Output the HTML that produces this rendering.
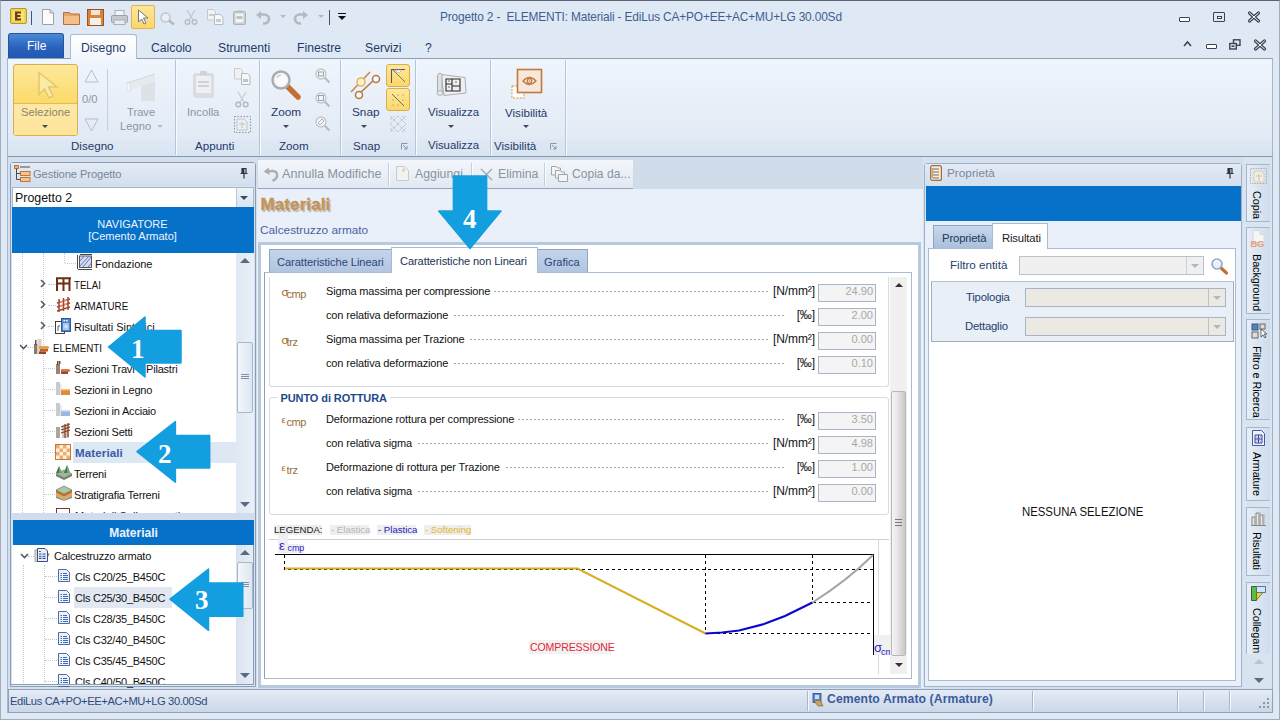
<!DOCTYPE html>
<html><head><meta charset="utf-8">
<style>
*{box-sizing:border-box;margin:0;padding:0}
html,body{width:1281px;height:723px;overflow:hidden;background:#fff;font-family:"Liberation Sans",sans-serif;font-size:12px;color:#000}
.a{position:absolute}
svg{position:absolute;overflow:visible}
#win{left:0;top:0;width:1280px;height:720px;background:#dfe9f5;overflow:hidden}
.t{position:absolute;white-space:nowrap;line-height:1}
.rt{position:absolute;white-space:nowrap;line-height:1;font-size:11.6px;color:#1e3a66}
.dis{color:#8c96a3}
.sep{position:absolute;width:1px;background:linear-gradient(rgba(170,190,215,0),#b5c6dc 15%,#b5c6dc 85%,rgba(170,190,215,0))}
.gsep{position:absolute;top:60px;width:2px;height:95px;border-left:1px solid #b4c5db;border-right:1px solid #f7faff}
.tri{position:absolute;width:0;height:0;border-left:3px solid transparent;border-right:3px solid transparent;border-top:3px solid #3c4a5c}
</style></head><body>
<div id="win" class="a">
<!-- ===== TITLE BAR ===== -->
<svg style="left:10px;top:8px" width="17" height="17" viewBox="0 0 17 17">
 <rect x="0.5" y="0.5" width="16" height="15" rx="1.5" fill="#f4d54a" stroke="#b9952a"/>
 <rect x="3" y="3" width="11" height="10" fill="#f9e27a"/>
 <path d="M5 3.5h6v2H7.3v1.5h3.2v2H7.3v1.6H11v2H5z" fill="#6b3a1c"/>
</svg>
<div class="a" style="left:31px;top:11px;width:1px;height:14px;background:#4a5563"></div>
<svg style="left:41px;top:9px" width="14" height="16" viewBox="0 0 14 16"><path d="M1.5 .5h7.5l3.5 3.5v11.5h-11z" fill="#fbfbfb" stroke="#9aa2ad"/><path d="M9 .5v3.5h3.5" fill="none" stroke="#9aa2ad"/></svg>
<svg style="left:63px;top:10px" width="17" height="15" viewBox="0 0 17 15"><path d="M.5 2.5h6l1.5 1.5h8.5v10.5H.5z" fill="#e6a36a" stroke="#b86f35"/><path d="M1 6h15v8H1z" fill="#f2bf8a"/></svg>
<svg style="left:87px;top:9px" width="17" height="17" viewBox="0 0 17 17"><rect x=".5" y=".5" width="16" height="16" fill="#d9843e" stroke="#9c5220"/><rect x="4" y="1" width="9" height="5" fill="#f3e4d4"/><rect x="3" y="9" width="11" height="7" fill="#f5f0ea"/></svg>
<svg style="left:111px;top:10px" width="17" height="15" viewBox="0 0 17 15"><rect x="4" y=".5" width="9" height="5" fill="#f4f4f4" stroke="#aab0b8"/><rect x=".5" y="5.5" width="16" height="7" rx="1" fill="#c4c9cf" stroke="#9aa0a8"/><rect x="3" y="10" width="11" height="4.5" fill="#e9ebee" stroke="#aab0b8"/></svg>
<div class="a" style="left:131px;top:5px;width:24px;height:24px;background:linear-gradient(#fde69a,#fcd66a);border:1px solid #e0b450;border-radius:2px"></div>
<svg style="left:137px;top:9px" width="13" height="16" viewBox="0 0 13 16"><path d="M1.5 1v12l3-3 2.5 5 2-1-2.5-5h4.5z" fill="#fff" stroke="#6e7680"/></svg>
<svg style="left:160px;top:12px" width="16" height="13" viewBox="0 0 16 13"><circle cx="5.5" cy="5.5" r="4.5" fill="#eceff2" stroke="#c2c6cc" stroke-width="1.5"/><path d="M9 8.5l5 4" stroke="#b4b8be" stroke-width="2.4"/></svg>
<svg style="left:184px;top:10px" width="14" height="15" viewBox="0 0 14 15"><path d="M3 0l6 10M11 0L5 10" stroke="#c4c8cd" stroke-width="1.3"/><circle cx="3.5" cy="12" r="2.3" fill="none" stroke="#b8bcc2" stroke-width="1.4"/><circle cx="10.5" cy="12" r="2.3" fill="none" stroke="#b8bcc2" stroke-width="1.4"/></svg>
<svg style="left:207px;top:9px" width="17" height="16" viewBox="0 0 17 16"><path d="M.5 .5h6l2 2v8.5H.5z" fill="#f2f3f5" stroke="#c5c9ce"/><path d="M7.5 5.5h6l2.5 2.5v7.5H7.5z" fill="#f6f7f8" stroke="#b9bdc3"/><rect x="9" y="10" width="5" height="3" fill="#c8ccd1"/><rect x="2" y="5" width="5" height="2" fill="#c8ccd1"/></svg>
<svg style="left:233px;top:10px" width="13" height="15" viewBox="0 0 13 15"><rect x=".5" y="1.5" width="12" height="13" rx="1" fill="#c9cdd2" stroke="#aeb3b9"/><rect x="2.5" y="3.5" width="8" height="9" fill="#f3f4f5"/><rect x="3.5" y="6" width="6" height="3" fill="#bfc3c8"/><rect x="4" y=".5" width="5" height="2" fill="#b4b9bf"/></svg>
<svg style="left:256px;top:11px" width="15" height="14" viewBox="0 0 15 14"><path d="M4 3.5h4.5a4.5 4.5 0 0 1 0 9H7" fill="none" stroke="#b4b9bf" stroke-width="2.6"/><path d="M0 4l5-4v8z" fill="#b4b9bf"/></svg>
<div class="tri" style="left:280px;top:15px;border-top-color:#b4b9bf"></div>
<svg style="left:293px;top:11px" width="15" height="14" viewBox="0 0 15 14"><path d="M11 3.5H6.5a4.5 4.5 0 0 0 0 9H8" fill="none" stroke="#b4b9bf" stroke-width="2.6"/><path d="M15 4l-5-4v8z" fill="#b4b9bf"/></svg>
<div class="tri" style="left:318px;top:15px;border-top-color:#b4b9bf"></div>
<div class="a" style="left:329px;top:10px;width:1px;height:15px;background:#4a5563"></div>
<div class="a" style="left:338px;top:13px;width:8px;height:1px;background:#111"></div>
<div class="tri" style="left:338px;top:16px;border-left-width:4px;border-right-width:4px;border-top:4px solid #111"></div>

<div class="t" style="left:440px;top:12px;font-size:11.9px;letter-spacing:-0.16px;color:#3e5e8e">Progetto 2 -&nbsp; ELEMENTI: Materiali - EdiLus CA+PO+EE+AC+MU+LG 30.00Sd</div>
<!-- window buttons -->
<div class="a" style="left:1179px;top:17px;width:11px;height:5px;border:1.5px solid #3a4350;border-radius:1px;background:#fff"></div>
<div class="a" style="left:1213px;top:12px;width:12px;height:10px;border:1.5px solid #3a4350;border-radius:1px"></div>
<div class="a" style="left:1217px;top:15.5px;width:5px;height:3.5px;border:1px solid #3a4350;background:#fff"></div>
<svg style="left:1248px;top:12px" width="12" height="10" viewBox="0 0 12 10"><path d="M1.5 1l9 8M10.5 1l-9 8" stroke="#3a4350" stroke-width="3.2" stroke-linecap="round"/><path d="M1.5 1l9 8M10.5 1l-9 8" stroke="#fff" stroke-width="1" stroke-linecap="round"/></svg>
<!-- MDI buttons -->
<svg style="left:1183px;top:41px" width="9" height="6" viewBox="0 0 9 6"><path d="M1 5l3.5-4 3.5 4" fill="none" stroke="#3a4350" stroke-width="1.5"/></svg>
<div class="a" style="left:1206px;top:44px;width:11px;height:5px;border:1.5px solid #3a4350;border-radius:1px;background:#fff"></div>
<svg style="left:1229px;top:39px" width="12" height="11" viewBox="0 0 12 11"><rect x="4.5" y=".8" width="6.5" height="5.5" fill="#dfe9f5" stroke="#3a4350" stroke-width="1.4"/><rect x=".8" y="4.5" width="6.5" height="5.5" fill="#dfe9f5" stroke="#3a4350" stroke-width="1.4"/><rect x="2.5" y="6.5" width="3" height="1.5" fill="#3a4350"/></svg>
<svg style="left:1254px;top:40px" width="12" height="10" viewBox="0 0 12 10"><path d="M1.5 1l9 8M10.5 1l-9 8" stroke="#3a4350" stroke-width="3.2" stroke-linecap="round"/><path d="M1.5 1l9 8M10.5 1l-9 8" stroke="#fff" stroke-width="1" stroke-linecap="round"/></svg>

<!-- ===== RIBBON TABS ===== -->
<div class="a" style="left:8px;top:33px;width:56px;height:25px;background:linear-gradient(#4a8ad8,#2a63bd 55%,#1f58b2);border:1px solid #27539a;border-bottom:none;border-radius:3px 3px 0 0"></div>
<div class="t" style="left:27px;top:40px;font-size:12px;color:#fff">File</div>
<div class="a" style="left:70px;top:34px;width:67px;height:25px;background:linear-gradient(#fdfeff,#f3f7fc);border:1px solid #a8bcd6;border-bottom:none;border-radius:3px 3px 0 0;z-index:2"></div>
<div class="rt" style="left:81px;top:42px;font-size:12.2px;z-index:3">Disegno</div>
<div class="rt" style="left:151px;top:42px;font-size:12.2px">Calcolo</div>
<div class="rt" style="left:218px;top:42px;font-size:12.2px">Strumenti</div>
<div class="rt" style="left:297px;top:42px;font-size:12.2px">Finestre</div>
<div class="rt" style="left:365px;top:42px;font-size:12.2px">Servizi</div>
<div class="rt" style="left:425px;top:42px;font-size:12.2px">?</div>
<!-- ===== RIBBON BODY ===== -->
<div class="a" style="left:7px;top:156px;width:1266px;height:557px;background:#d5e0ee;border-left:1px solid #a3b6cf;border-right:1px solid #a3b6cf"></div>
<div class="a" style="left:7px;top:58px;width:1266px;height:99px;background:linear-gradient(#eef5fc 0%,#e8eff8 45%,#dfe8f4 100%);border:1px solid #a3b6cf;border-top-color:#8d9db3;border-bottom-color:#8797ad"></div>
<div class="a" style="left:8px;top:139px;width:1264px;height:17px;background:linear-gradient(#dfe8f4,#d9e4f2)"></div>
<!-- Disegno group -->
<div class="a" style="left:13px;top:64px;width:65px;height:72px;background:linear-gradient(#fde89c,#fcda68 55%,#fcdf7a);border:1px solid #d9ae4c;border-radius:3px"></div>
<div class="a" style="left:14px;top:103px;width:63px;height:1px;background:#e2b85a"></div>
<div class="a" style="left:14px;top:104px;width:63px;height:31px;background:linear-gradient(#fde9a6,#fde49a)"></div>
<svg style="left:37px;top:71px" width="22" height="29" viewBox="0 0 22 29"><path d="M2 1.5v22l5.5-5.5 4.5 9 4-2-4.5-9h8.5z" fill="#fbe9a6" stroke="#e4c572" stroke-width="1.5"/></svg>
<div class="rt dis" style="left:21px;top:107px;font-size:11.2px;color:#8b8470">Selezione</div>
<div class="tri" style="left:42px;top:125px"></div>
<svg style="left:84px;top:69px" width="15" height="14" viewBox="0 0 15 14"><path d="M7.5 1L14 13H1z" fill="none" stroke="#b6bfca"/></svg>
<div class="rt dis" style="left:82px;top:94px;font-size:11.2px;color:#8c96a3">0/0</div>
<svg style="left:84px;top:118px" width="15" height="14" viewBox="0 0 15 14"><path d="M7.5 13L14 1H1z" fill="none" stroke="#b6bfca"/></svg>
<div class="a" style="left:107px;top:69px;width:1px;height:62px;background:#c3d0e0"></div>
<svg style="left:126px;top:71px" width="32" height="30" viewBox="0 0 32 30"><path d="M1 12L29 3v8L1 20z" fill="#e6eaee"/><path d="M1 12l28-9" stroke="#d2d8de"/><rect x="1" y="12" width="3" height="8" fill="#f4f6f8" stroke="#d0d6dc" stroke-width=".6"/><path d="M15 15l14-4v19H15z" fill="#dde2e7"/></svg>
<div class="rt dis" style="left:127px;top:107px;font-size:11.2px;color:#8c96a3">Trave</div>
<div class="rt dis" style="left:120px;top:121px;font-size:11.2px;color:#8c96a3">Legno</div>
<div class="tri" style="left:157px;top:125px;border-top-color:#b6bfca"></div>
<div class="rt" style="left:71px;top:140px;font-size:11.6px">Disegno</div>
<div class="gsep" style="left:175px"></div>
<!-- Appunti -->
<svg style="left:192px;top:70px" width="24" height="29" viewBox="0 0 24 29"><rect x="1" y="3" width="21" height="25" rx="3" fill="#d9dde2"/><rect x="4" y="6" width="15" height="17" fill="#eef0f2"/><rect x="6" y="11" width="11" height="2" fill="#cdd2d7"/><rect x="6" y="15" width="11" height="2" fill="#cdd2d7"/><rect x="8" y="1" width="7" height="4" rx="1" fill="#cfd4d9"/></svg>
<div class="rt dis" style="left:187px;top:107px;font-size:11.2px;color:#8c96a3">Incolla</div>
<svg style="left:234px;top:68px" width="17" height="17" viewBox="0 0 17 17"><path d="M.5 .5h6l2 2v8.5H.5z" fill="#f0f1f3" stroke="#c9cdd2"/><path d="M7.5 5.5h6l2.5 2.5v8.5H7.5z" fill="#f6f7f8" stroke="#b4b9bf"/><rect x="9" y="11" width="5" height="3" fill="#c2c6cb"/></svg>
<svg style="left:235px;top:92px" width="14" height="16" viewBox="0 0 14 16"><path d="M3 0l6 10M11 0L5 10" stroke="#c8ccd1" stroke-width="1.2"/><circle cx="3.3" cy="12.5" r="2.3" fill="none" stroke="#b4b8be" stroke-width="1.5"/><circle cx="10.7" cy="12.5" r="2.3" fill="none" stroke="#b4b8be" stroke-width="1.5"/></svg>
<svg style="left:234px;top:116px" width="17" height="17" viewBox="0 0 17 17"><rect x=".5" y=".5" width="16" height="16" fill="none" stroke="#8f969e" stroke-dasharray="1.5 1.5"/><path d="M3 3h7l3 3v8H3z" fill="#eceef0" stroke="#c2c6cb"/><path d="M5 8h6M8 6v6" stroke="#c2c6cb"/></svg>
<div class="rt" style="left:195px;top:140px;font-size:11.6px">Appunti</div>
<div class="gsep" style="left:259px"></div>
<!-- Zoom -->
<svg style="left:271px;top:70px" width="30" height="30" viewBox="0 0 30 30"><path d="M16 16l11 11" stroke="#c27034" stroke-width="5.5" stroke-linecap="round"/><circle cx="10" cy="10" r="8.5" fill="#f3f3f3" stroke="#a9adb2" stroke-width="2.5"/><circle cx="10" cy="10" r="6" fill="#fafafa"/><path d="M6 8a4 4 0 0 1 4-3" stroke="#b0b0b0" fill="none"/></svg>
<div class="rt" style="left:271px;top:107px;font-size:11.8px">Zoom</div>
<div class="tri" style="left:283px;top:125px"></div>
<svg style="left:315px;top:68px" width="16" height="16" viewBox="0 0 16 16"><path d="M8.5 8.5l6 6" stroke="#b8bcc1" stroke-width="2.2"/><circle cx="6" cy="6" r="5" fill="#f4f5f6" stroke="#c2c6cb" stroke-width="1.3"/><rect x="3.5" y="4" width="5" height="4" fill="none" stroke="#888e96" stroke-width=".8"/></svg>
<svg style="left:315px;top:92px" width="16" height="16" viewBox="0 0 16 16"><path d="M8.5 8.5l6 6" stroke="#b8bcc1" stroke-width="2.2"/><circle cx="6" cy="6" r="5" fill="#f4f5f6" stroke="#c2c6cb" stroke-width="1.3"/><rect x="3.5" y="3.5" width="5" height="5" fill="none" stroke="#888e96" stroke-width=".8"/></svg>
<svg style="left:315px;top:116px" width="16" height="16" viewBox="0 0 16 16"><path d="M8.5 8.5l6 6" stroke="#b8bcc1" stroke-width="2.2"/><circle cx="6" cy="6" r="5" fill="#f4f5f6" stroke="#c2c6cb" stroke-width="1.3"/><path d="M3 7l4-4 2 2-4 4z" fill="none" stroke="#9aa0a8" stroke-width=".8"/></svg>
<div class="rt" style="left:279px;top:140px;font-size:11.6px">Zoom</div>
<div class="gsep" style="left:340px"></div>
<!-- Snap -->
<svg style="left:350px;top:70px" width="30" height="30" viewBox="0 0 30 30"><path d="M1 22L20 2" stroke="#c98a4e" stroke-width="1.6"/><path d="M10 23L24 10" stroke="#b87a44" stroke-width="1.6"/><circle cx="11" cy="12" r="4" fill="#fff3c4" stroke="#e2b760" stroke-width="1.6"/><circle cx="26" cy="9" r="3.5" fill="#fff" stroke="#b87a44" stroke-width="1.6"/><circle cx="9" cy="25" r="3.5" fill="#fff" stroke="#b87a44" stroke-width="1.6"/></svg>
<div class="rt" style="left:352px;top:107px;font-size:11.8px">Snap</div>
<div class="tri" style="left:361px;top:125px"></div>
<div class="a" style="left:386px;top:64px;width:24px;height:23px;background:linear-gradient(#fde89c,#fcd86a);border:1px solid #d9ae4c;border-radius:3px"></div>
<svg style="left:390px;top:68px" width="16" height="16" viewBox="0 0 16 16"><path d="M1.5 15V1.5H15" fill="none" stroke="#5a5a5a" stroke-width="1.1"/><path d="M3 2l12 12" stroke="#6a6a6a" stroke-width=".9"/><path d="M4 2h8l-3 3z" fill="#fff" stroke="#999" stroke-width=".5"/></svg>
<div class="a" style="left:386px;top:88px;width:24px;height:23px;background:linear-gradient(#fde89c,#fcd86a);border:1px solid #d9ae4c;border-radius:3px"></div>
<svg style="left:390px;top:92px" width="16" height="16" viewBox="0 0 16 16"><path d="M2 2l12 12" stroke="#6a6a6a" stroke-width="1"/><g fill="#8a7a50"><circle cx="3" cy="8" r=".6"/><circle cx="8" cy="3" r=".6"/><circle cx="13" cy="8" r=".6"/><circle cx="8" cy="13" r=".6"/><circle cx="13" cy="3" r=".6"/><circle cx="3" cy="13" r=".6"/></g></svg>
<svg style="left:390px;top:116px" width="16" height="16" viewBox="0 0 16 16"><path d="M0 0l16 16M16 0L0 16M0 8l8-8 8 8-8 8zM0 4l4-4M12 0l4 4M0 12l4 4M12 16l4-4" fill="none" stroke="#9aa0a6" stroke-width=".8" stroke-dasharray="1 1"/></svg>
<div class="rt" style="left:353px;top:140px;font-size:11.6px">Snap</div>
<svg style="left:401px;top:143px" width="7" height="7" viewBox="0 0 7 7"><path d="M.5 6.5V.5h6" fill="none" stroke="#8a96a6"/><path d="M2 2l4 4M6 3v3H3" fill="none" stroke="#8a96a6"/></svg>
<div class="gsep" style="left:415px"></div>
<!-- Visualizza -->
<svg style="left:436px;top:72px" width="31" height="25" viewBox="0 0 31 25"><path d="M5 2.5L29 5.5 30 21 8 23.5z" fill="#efefef" stroke="#a4a8ad" stroke-width=".9"/><path d="M1.5 3.5C1.5 1 6 .5 6 3v17c0 2.5-4.5 3-4.5.5z" fill="#dfe1e3" stroke="#9ea3a8" stroke-width=".9"/><ellipse cx="4" cy="21" rx="3" ry="2.3" fill="#e8e9ea" stroke="#9ea3a8" stroke-width=".8"/><path d="M10 7h6v5h-6zM16 7h8v7h-8zM10 12h6v7h-6zM16 14h8v5h-8z" fill="none" stroke="#2a2a2a" stroke-width="1.1"/><path d="M12 9h2M19 10h2M12 15h2" stroke="#555" stroke-width=".8"/></svg>
<div class="rt" style="left:428px;top:107px;font-size:11.4px">Visualizza</div>
<div class="tri" style="left:448px;top:125px"></div>
<div class="rt" style="left:428px;top:140px;font-size:11.4px">Visualizza</div>
<div class="gsep" style="left:490px"></div>
<!-- Visibilita -->
<svg style="left:511px;top:68px" width="32" height="31" viewBox="0 0 32 31"><rect x="1" y="18" width="12" height="12" fill="#fff" stroke="#d89048" stroke-dasharray="2 1.3"/><rect x="6.5" y="1.5" width="24" height="23" fill="#f7e8da" stroke="#c07a3e" stroke-width="1.6"/><path d="M12 13q6.5-7 13 0q-6.5 7-13 0z" fill="none" stroke="#c07a3e" stroke-width="1.3"/><circle cx="18.5" cy="13" r="2.3" fill="none" stroke="#c07a3e" stroke-width="1.2"/><circle cx="18.5" cy="13" r=".8" fill="#c07a3e"/></svg>
<div class="rt" style="left:505px;top:107px;font-size:11.6px">Visibilità</div>
<div class="tri" style="left:523px;top:125px"></div>
<div class="rt" style="left:494px;top:140px;font-size:11.6px">Visibilità</div>
<svg style="left:550px;top:143px" width="7" height="7" viewBox="0 0 7 7"><path d="M.5 6.5V.5h6" fill="none" stroke="#8a96a6"/><path d="M2 2l4 4M6 3v3H3" fill="none" stroke="#8a96a6"/></svg>
<div class="gsep" style="left:565px"></div>
<!-- ===== LEFT PANEL ===== -->
<div class="a" style="left:10px;top:162px;width:246px;height:525px;background:#d6e2f0;border:1px solid #8a9db6;border-radius:3px 3px 0 0"></div>
<div class="a" style="left:11px;top:163px;width:244px;height:23px;background:linear-gradient(#e2eaf5,#d3deed)"></div>
<svg style="left:14px;top:165px" width="17" height="17" viewBox="0 0 17 17"><rect x=".5" y=".5" width="4" height="3" fill="#f0b070" stroke="#c06a28" stroke-width=".9"/><path d="M2.5 3.5V14.5h4M2.5 8.5h4" fill="none" stroke="#4a4a4a" stroke-width="1"/><rect x="6.5" y="6.5" width="9.5" height="4" fill="#f6c48e" stroke="#c06a28" stroke-width=".9"/><rect x="6.5" y="12.5" width="9.5" height="4" fill="#f6c48e" stroke="#c06a28" stroke-width=".9"/><path d="M6 2h10" stroke="#4a4a4a"/></svg>
<div class="t" style="left:33px;top:168.5px;font-size:11.2px;color:#7b8799;letter-spacing:-.1px">Gestione Progetto</div>
<svg style="left:240px;top:168px" width="8" height="11" viewBox="0 0 8 11"><path d="M1.5 .5h5M2 .5v5M6 .5v5M.5 5.5h7M4 5.5V10.5" fill="none" stroke="#2c3440" stroke-width="1.2"/><rect x="2" y="1" width="2.4" height="4.5" fill="#2c3440"/></svg>
<!-- combobox -->
<div class="a" style="left:12px;top:187px;width:242px;height:21px;background:#fff;border:1px solid #a7b8cc"></div>
<div class="a" style="left:236px;top:188px;width:17px;height:19px;background:linear-gradient(#eef3f9,#dae4f0);border-left:1px solid #b8c8da"></div>
<div class="tri" style="left:240px;top:196px;border-left-width:4px;border-right-width:4px;border-top-width:4px;border-top-color:#3c4a5c"></div>
<div class="t" style="left:15px;top:191.5px;font-size:12.4px;color:#111">Progetto 2</div>
<!-- navigator band -->
<div class="a" style="left:12px;top:207px;width:242px;height:46px;background:#0571c8"></div>
<div class="t" style="left:12px;width:241px;text-align:center;top:219px;font-size:11px;color:#eef4ff">NAVIGATORE</div>
<div class="t" style="left:12px;width:241px;text-align:center;top:231px;font-size:11px;color:#eef4ff">[Cemento Armato]</div>
<!-- tree 1 -->
<div class="a" style="left:12px;top:253px;width:224px;height:260px;background:#fff;overflow:hidden">
 <div class="a" style="left:10px;top:0;width:1px;height:260px;border-left:1px dotted #c4c9d0"></div>
 <div class="a" style="left:31px;top:0;width:1px;height:260px;border-left:1px dotted #c4c9d0"></div>
 <div class="a" style="left:52px;top:0;width:1px;height:10px;border-left:1px dotted #c4c9d0"></div>
 <div class="a" style="left:53px;top:10px;width:11px;height:1px;border-top:1px dotted #c4c9d0"></div>
 <div class="a" style="left:36px;top:31px;width:8px;height:1px;border-top:1px dotted #c4c9d0"></div>
 <div class="a" style="left:36px;top:52px;width:8px;height:1px;border-top:1px dotted #c4c9d0"></div>
 <div class="a" style="left:36px;top:73px;width:8px;height:1px;border-top:1px dotted #c4c9d0"></div>
 <div class="a" style="left:15px;top:94px;width:8px;height:1px;border-top:1px dotted #c4c9d0"></div>
 <div class="a" style="left:32px;top:115px;width:11px;height:1px;border-top:1px dotted #c4c9d0"></div>
 <div class="a" style="left:32px;top:136px;width:11px;height:1px;border-top:1px dotted #c4c9d0"></div>
 <div class="a" style="left:32px;top:157px;width:11px;height:1px;border-top:1px dotted #c4c9d0"></div>
 <div class="a" style="left:32px;top:178px;width:11px;height:1px;border-top:1px dotted #c4c9d0"></div>
 <div class="a" style="left:32px;top:199px;width:11px;height:1px;border-top:1px dotted #c4c9d0"></div>
 <div class="a" style="left:32px;top:220px;width:11px;height:1px;border-top:1px dotted #c4c9d0"></div>
 <div class="a" style="left:32px;top:241px;width:11px;height:1px;border-top:1px dotted #c4c9d0"></div>
 <div class="a" style="left:61px;top:189px;width:163px;height:21px;background:#dde8f5"></div>
</div>
<!-- tree1 items (abs page coords) -->
<svg style="left:77px;top:254px" width="16" height="16" viewBox="0 0 16 16"><path d="M.5 1v14M1 15.5h14M3 .5h12" stroke="#333" stroke-width=".9"/><rect x="2.5" y="2" width="12" height="11.5" fill="#d4dcef" stroke="#445" stroke-width=".9"/><path d="M3 7l4-5M3 12l9-10M6 13l8-10M11 13l3.5-4" stroke="#6a7ab0" stroke-width="1"/></svg>
<div class="t" style="left:95px;top:259px;font-size:11px;color:#111">Fondazione</div>
<svg style="left:40px;top:279px" width="6" height="9" viewBox="0 0 6 9"><path d="M1 1l3.5 3.5L1 8" fill="none" stroke="#4f5b6b" stroke-width="1.6"/></svg>
<svg style="left:56px;top:277px" width="15" height="14" viewBox="0 0 15 14"><path d="M1 1v13M7.5 1v13M13.5 1v13M0 1.2h15M1 6.5h13" stroke="#6e2e16" stroke-width="2" fill="none"/></svg>
<div class="t" style="left:74px;top:280px;font-size:11px;color:#111;transform:scaleX(0.88);transform-origin:0 0">TELAI</div>
<svg style="left:40px;top:300px" width="6" height="9" viewBox="0 0 6 9"><path d="M1 1l3.5 3.5L1 8" fill="none" stroke="#4f5b6b" stroke-width="1.6"/></svg>
<svg style="left:57px;top:297px" width="13" height="15" viewBox="0 0 13 15"><path d="M2 2v13M6.5 1v13M11 0v13M0 6l13-4M0 10l13-4M0 14l13-4" stroke="#a8482a" stroke-width="1.5" fill="none"/><path d="M3 5l3-1M3 9l3-1M7 4l3-1M7 8l3-1" stroke="#f0a080" stroke-width="1"/></svg>
<div class="t" style="left:74px;top:301px;font-size:11px;color:#111;transform:scaleX(0.89);transform-origin:0 0">ARMATURE</div>
<svg style="left:40px;top:321px" width="6" height="9" viewBox="0 0 6 9"><path d="M1 1l3.5 3.5L1 8" fill="none" stroke="#4f5b6b" stroke-width="1.6"/></svg>
<svg style="left:55px;top:318px" width="16" height="16" viewBox="0 0 16 16"><rect x=".5" y="3.5" width="9" height="12" fill="#fff" stroke="#2a2a2a" stroke-width=".9"/><path d="M3 13V8h2" fill="none" stroke="#333" stroke-width=".8"/><rect x="6.5" y=".5" width="9" height="13" fill="#4f86cc" stroke="#24508a" stroke-width=".9"/><rect x="8" y="5" width="6" height="7" fill="#a8c8ee"/><circle cx="11" cy="8.5" r="1.8" fill="#d0e2f8"/><rect x="8.5" y="2" width="1.6" height="1.4" fill="#fff"/><rect x="11" y="2" width="1.6" height="1.4" fill="#fff"/></svg>
<div class="t" style="left:74px;top:322px;font-size:11px;color:#111">Risultati Sintetici</div>
<svg style="left:19px;top:344px" width="9" height="6" viewBox="0 0 9 6"><path d="M1 1l3.5 3.5L8 1" fill="none" stroke="#4f5b6b" stroke-width="1.6"/></svg>
<svg style="left:34px;top:339px" width="16" height="15" viewBox="0 0 16 15"><rect x="0" y="5" width="3.5" height="10" fill="#8a7a6c"/><rect x="1" y="1" width="1.5" height="5" fill="#6a4a38"/><rect x="3.5" y="0" width="4" height="15" fill="#d8d4cc"/><path d="M5 7h9l1.5 1.5L14 10H5z" fill="#e8a050"/><path d="M6 10h8v2.5H6z" fill="#c0602a"/><path d="M5 12.5h7V15H5z" fill="#8a4a28"/></svg>
<div class="t" style="left:53px;top:343px;font-size:11px;color:#111;transform:scaleX(0.89);transform-origin:0 0">ELEMENTI</div>
<svg style="left:56px;top:361px" width="15" height="13" viewBox="0 0 15 13"><rect x="0" y="3" width="4" height="10" fill="#9a8474"/><rect x="1" y="0" width="1.5" height="4" fill="#6a4a38"/><rect x="3" y="0" width="1.5" height="3" fill="#6a4a38"/><path d="M5 8h8l1.5 1.5-1.5 1.5H5z" fill="#d08050"/><rect x="5" y="10.5" width="7" height="2.5" fill="#a04a28"/></svg>
<div class="t" style="left:74px;top:364px;font-size:11px;color:#111;letter-spacing:-.2px">Sezioni Travi e Pilastri</div>
<svg style="left:56px;top:382px" width="15" height="13" viewBox="0 0 15 13"><rect x="0" y="0" width="4" height="13" fill="#c8ccd0"/><rect x="4" y="2" width="1.5" height="11" fill="#e4e6e8"/><path d="M5 8h9v5H5z" fill="#e08a3a"/><path d="M5 7h9v1.5H5z" fill="#f4c080"/></svg>
<div class="t" style="left:74px;top:385px;font-size:11px;color:#111;letter-spacing:-.2px">Sezioni in Legno</div>
<svg style="left:56px;top:403px" width="15" height="13" viewBox="0 0 15 13"><rect x="0" y="0" width="4" height="13" fill="#c8ccd0"/><rect x="4" y="2" width="1.5" height="11" fill="#e4e6e8"/><path d="M5 8h9v5H5z" fill="#9ab8dc"/><path d="M5 7h9v1.5H5z" fill="#cfe0f4"/></svg>
<div class="t" style="left:74px;top:406px;font-size:11px;color:#111;letter-spacing:-.2px">Sezioni in Acciaio</div>
<svg style="left:56px;top:423px" width="15" height="15" viewBox="0 0 15 15"><rect x="0" y="4" width="4" height="11" fill="#b0a498"/><path d="M6 2h7v13H6z" fill="#d0c8c0"/><path d="M5 4l9-3M5 7l9-3M5 10l9-3M9 1v14M12 0v14" stroke="#8a3a1a" stroke-width="1.2"/></svg>
<div class="t" style="left:74px;top:427px;font-size:11px;color:#111;letter-spacing:-.2px">Sezioni Setti</div>
<svg style="left:55px;top:444px" width="16" height="16" viewBox="0 0 16 16"><rect x=".5" y=".5" width="15" height="15" fill="#fdf0dc" stroke="#c8783a"/><g fill="#eeac6c"><rect x="1.0" y="1.0" width="3.5" height="3.5"/><rect x="8.0" y="1.0" width="3.5" height="3.5"/><rect x="4.5" y="4.5" width="3.5" height="3.5"/><rect x="11.5" y="4.5" width="3.5" height="3.5"/><rect x="1.0" y="8.0" width="3.5" height="3.5"/><rect x="8.0" y="8.0" width="3.5" height="3.5"/><rect x="4.5" y="11.5" width="3.5" height="3.5"/><rect x="11.5" y="11.5" width="3.5" height="3.5"/></g></svg>
<div class="t" style="left:75px;top:446.5px;font-size:11.6px;color:#3b5ba6;font-weight:bold;letter-spacing:.1px">Materiali</div>
<svg style="left:55px;top:464px" width="17" height="16" viewBox="0 0 17 16"><path d="M1 10l8-4 8 4-8 4z" fill="#a8b0a0" stroke="#6a7060" stroke-width=".6"/><path d="M1 10v2l8 4v-2zM17 10v2l-8 4v-2z" fill="#707868"/><path d="M4 2l-3 7h6zM12 1l-3 8h6z" fill="#3a7a4a"/><path d="M4 2l3 7H4zM12 1l3 8h-3z" fill="#6aaa70"/></svg>
<div class="t" style="left:74px;top:469px;font-size:11px;color:#111;letter-spacing:-.2px">Terreni</div>
<svg style="left:55px;top:485px" width="17" height="16" viewBox="0 0 17 16"><path d="M1 5l8-4 8 4-8 4z" fill="#a8c8a8" stroke="#5a6a5a" stroke-width=".6"/><path d="M1 5v3l8 4V9zM17 5v3l-8 4V9z" fill="#c07030"/><path d="M1 8v3l8 4v-3zM17 8v3l-8 4v-3z" fill="#d8a860"/><path d="M1 11v2l8 3v-1zM17 11v2l-8 3v-1z" fill="#8a8a8a"/></svg>
<div class="t" style="left:74px;top:490px;font-size:11px;color:#111;letter-spacing:-.2px">Stratigrafia Terreni</div>
<div class="a" style="left:12px;top:506px;width:224px;height:7px;overflow:hidden"><svg style="left:44px;top:2px" width="15" height="14"><rect x=".5" y=".5" width="13" height="13" fill="#fff" stroke="#7a3a2a"/></svg><div class="t" style="left:63px;top:5px;font-size:11px;color:#111">Materiali Solle e ponti</div></div>
<!-- tree1 scrollbar -->
<div class="a" style="left:236px;top:253px;width:18px;height:260px;background:linear-gradient(90deg,#dfe8f3,#e9f0f8)"></div>
<div class="tri" style="left:240px;top:258px;border-left-width:5px;border-right-width:5px;border-top:none;border-bottom:5px solid #5a6a80"></div>
<div class="a" style="left:237px;top:342px;width:16px;height:71px;background:linear-gradient(90deg,#f4f7fb,#dde6f1);border:1px solid #a8b8cc;border-radius:2px"></div>
<div class="a" style="left:241px;top:374px;width:8px;height:5px;border-top:1px solid #8090a8;border-bottom:1px solid #8090a8"></div>
<div class="a" style="left:241px;top:376px;width:8px;height:1px;background:#8090a8"></div>
<div class="tri" style="left:240px;top:502px;border-left-width:5px;border-right-width:5px;border-top:5px solid #5a6a80"></div>
<!-- splitter + Materiali band -->
<div class="a" style="left:12px;top:513px;width:242px;height:7px;background:#d1ddec"></div>
<div class="a" style="left:13px;top:520px;width:241px;height:25px;background:#0571c8"></div>
<div class="t" style="left:13px;width:241px;text-align:center;top:526.5px;font-size:12px;color:#eef4ff;font-weight:bold">Materiali</div>
<!-- tree 2 -->
<div class="a" style="left:12px;top:545px;width:224px;height:139px;background:#fff;overflow:hidden">
 <div class="a" style="left:11px;top:20px;width:1px;height:120px;border-left:1px dotted #c4c9d0"></div>
 <div class="a" style="left:32px;top:20px;width:1px;height:120px;border-left:1px dotted #c4c9d0"></div>
 <div class="a" style="left:16px;top:11px;width:8px;height:1px;border-top:1px dotted #c4c9d0"></div>
 <div class="a" style="left:33px;top:31px;width:12px;height:1px;border-top:1px dotted #c4c9d0"></div>
 <div class="a" style="left:33px;top:52px;width:12px;height:1px;border-top:1px dotted #c4c9d0"></div>
 <div class="a" style="left:33px;top:73px;width:12px;height:1px;border-top:1px dotted #c4c9d0"></div>
 <div class="a" style="left:33px;top:94px;width:12px;height:1px;border-top:1px dotted #c4c9d0"></div>
 <div class="a" style="left:33px;top:115px;width:12px;height:1px;border-top:1px dotted #c4c9d0"></div>
 <div class="a" style="left:33px;top:136px;width:12px;height:1px;border-top:1px dotted #c4c9d0"></div>
 <div class="a" style="left:62px;top:42px;width:98px;height:21px;background:#e1e8f1"></div>
</div>
<svg style="left:20px;top:553px" width="9" height="6" viewBox="0 0 9 6"><path d="M1 1l3.5 3.5L8 1" fill="none" stroke="#4f5b6b" stroke-width="1.6"/></svg>
<svg style="left:35px;top:548px" width="16" height="14" viewBox="0 0 16 14"><rect x="0" y="2" width="2.5" height="11.5" fill="#dcdcc8" stroke="#8a8a80" stroke-width=".7"/><path d="M2.5 .5h7.5l2.5 2.5v10.5H2.5z" fill="#e8f0fc" stroke="#3a4a8a" stroke-width="1"/><path d="M4 3.5h1.8M4 6h2.5M7.5 6h3M4 8.2h2.5M7.5 8.2h3M4 10.4h2.5M7.5 10.4h3" stroke="#3a4a8a" stroke-width="1.1"/><path d="M13 5l1.8 1-1.8 3z" fill="#b89030"/></svg>
<div class="t" style="left:54px;top:551px;font-size:11px;color:#111;letter-spacing:-.2px">Calcestruzzo armato</div>
<svg style="left:58px;top:569px" width="12" height="13" viewBox="0 0 12 13"><path d="M.5 .5h8l3 3v9H.5z" fill="#eef3fb" stroke="#3a5a9a" stroke-width=".9"/><path d="M2.5 4.5h1.5M5 4.5h4M2.5 6.5h1.5M5 6.5h5M2.5 8.5h1.5M5 8.5h5M2.5 10.5h1.5M5 10.5h5" stroke="#3a6ab8" stroke-width="1"/></svg>
<div class="t" style="left:75px;top:572.2px;font-size:11px;color:#111;letter-spacing:-.25px">Cls C20/25_B450C</div>
<svg style="left:58px;top:590px" width="12" height="13" viewBox="0 0 12 13"><path d="M.5 .5h8l3 3v9H.5z" fill="#eef3fb" stroke="#3a5a9a" stroke-width=".9"/><path d="M2.5 4.5h1.5M5 4.5h4M2.5 6.5h1.5M5 6.5h5M2.5 8.5h1.5M5 8.5h5M2.5 10.5h1.5M5 10.5h5" stroke="#3a6ab8" stroke-width="1"/></svg>
<div class="t" style="left:75px;top:593.2px;font-size:11px;color:#111;letter-spacing:-.25px">Cls C25/30_B450C</div>
<svg style="left:58px;top:611px" width="12" height="13" viewBox="0 0 12 13"><path d="M.5 .5h8l3 3v9H.5z" fill="#eef3fb" stroke="#3a5a9a" stroke-width=".9"/><path d="M2.5 4.5h1.5M5 4.5h4M2.5 6.5h1.5M5 6.5h5M2.5 8.5h1.5M5 8.5h5M2.5 10.5h1.5M5 10.5h5" stroke="#3a6ab8" stroke-width="1"/></svg>
<div class="t" style="left:75px;top:614.2px;font-size:11px;color:#111;letter-spacing:-.25px">Cls C28/35_B450C</div>
<svg style="left:58px;top:632px" width="12" height="13" viewBox="0 0 12 13"><path d="M.5 .5h8l3 3v9H.5z" fill="#eef3fb" stroke="#3a5a9a" stroke-width=".9"/><path d="M2.5 4.5h1.5M5 4.5h4M2.5 6.5h1.5M5 6.5h5M2.5 8.5h1.5M5 8.5h5M2.5 10.5h1.5M5 10.5h5" stroke="#3a6ab8" stroke-width="1"/></svg>
<div class="t" style="left:75px;top:635.2px;font-size:11px;color:#111;letter-spacing:-.25px">Cls C32/40_B450C</div>
<svg style="left:58px;top:653px" width="12" height="13" viewBox="0 0 12 13"><path d="M.5 .5h8l3 3v9H.5z" fill="#eef3fb" stroke="#3a5a9a" stroke-width=".9"/><path d="M2.5 4.5h1.5M5 4.5h4M2.5 6.5h1.5M5 6.5h5M2.5 8.5h1.5M5 8.5h5M2.5 10.5h1.5M5 10.5h5" stroke="#3a6ab8" stroke-width="1"/></svg>
<div class="t" style="left:75px;top:656.2px;font-size:11px;color:#111;letter-spacing:-.25px">Cls C35/45_B450C</div>
<svg style="left:58px;top:674px" width="12" height="13" viewBox="0 0 12 13"><path d="M.5 .5h8l3 3v9H.5z" fill="#eef3fb" stroke="#3a5a9a" stroke-width=".9"/><path d="M2.5 4.5h1.5M5 4.5h4M2.5 6.5h1.5M5 6.5h5M2.5 8.5h1.5M5 8.5h5M2.5 10.5h1.5M5 10.5h5" stroke="#3a6ab8" stroke-width="1"/></svg>
<div class="t" style="left:75px;top:677.2px;font-size:11px;color:#111;letter-spacing:-.25px">Cls C40/50_B450C</div>
<div class="a" style="left:11px;top:684px;width:243px;height:1px;background:#8a9bb2"></div><div class="a" style="left:253px;top:545px;width:1px;height:140px;background:#8a9bb2"></div><div class="a" style="left:11px;top:685px;width:244px;height:1px;background:#e4ecf6"></div>
<!-- tree2 scrollbar -->
<div class="a" style="left:236px;top:545px;width:17px;height:139px;background:linear-gradient(90deg,#d9e3ef,#e6edf6)"></div>
<div class="tri" style="left:240px;top:550px;border-left-width:5px;border-right-width:5px;border-top:none;border-bottom:5px solid #5a6a80"></div>
<div class="a" style="left:237px;top:562px;width:16px;height:47px;background:linear-gradient(90deg,#f4f7fb,#dde6f1);border:1px solid #a8b8cc;border-radius:2px"></div>
<div class="a" style="left:241px;top:582px;width:8px;height:5px;border-top:1px solid #8090a8;border-bottom:1px solid #8090a8"></div>
<div class="a" style="left:241px;top:584px;width:8px;height:1px;background:#8090a8"></div>
<div class="tri" style="left:240px;top:673px;border-left-width:5px;border-right-width:5px;border-top:5px solid #5a6a80"></div>
<!-- ===== CENTER ===== -->
<div class="a" style="left:257px;top:157px;width:666px;height:531px;background:#e9f0f9"></div>
<div class="a" style="left:257px;top:157px;width:666px;height:32px;background:#d0dcea"></div>
<div class="a" style="left:258px;top:160px;width:375px;height:29px;background:linear-gradient(#f3f6fb,#e2e9f3);border-bottom:1px solid #93a5bd"></div>
<svg style="left:263px;top:166px" width="16" height="16" viewBox="0 0 16 16"><path d="M4.5 6.5C8 4 13 4.5 14 8c.8 3-1.5 5.5-4.5 7" fill="none" stroke="#a9aeb5" stroke-width="2.4"/><path d="M0.5 5.5L6 1.5 6.5 9z" fill="#a9aeb5"/></svg>
<div class="t" style="left:282px;top:168px;font-size:12.6px;color:#8a939f">Annulla Modifiche</div>
<div class="a" style="left:388px;top:163px;width:1px;height:23px;background:#c4cfdc;box-shadow:1px 0 0 #f8fbff"></div>
<svg style="left:396px;top:166px" width="13" height="15" viewBox="0 0 13 15"><path d="M.5 .5h8l4 4v10H.5z" fill="#f2f2f0" stroke="#c8ccd0"/><path d="M8 1l-2 5 3-1z" fill="#d8c898"/></svg>
<div class="t" style="left:415px;top:168px;font-size:12.3px;color:#8a939f">Aggiungi</div>
<div class="a" style="left:471px;top:163px;width:1px;height:23px;background:#c4cfdc;box-shadow:1px 0 0 #f8fbff"></div>
<svg style="left:480px;top:168px" width="13" height="13" viewBox="0 0 13 13"><path d="M1 1l11 11M12 1L1 12" stroke="#a3a8ae" stroke-width="1.4"/></svg>
<div class="t" style="left:498px;top:168px;font-size:12.3px;color:#8a939f">Elimina</div>
<div class="a" style="left:544px;top:163px;width:1px;height:23px;background:#c4cfdc;box-shadow:1px 0 0 #f8fbff"></div>
<svg style="left:551px;top:166px" width="17" height="16" viewBox="0 0 17 16"><path d="M.5 .5h5l1 1.5h3v7H.5z" fill="#f4f4f4" stroke="#a0a5ab"/><path d="M4.5 4.5h5l1 1.5h3v6H4.5z" fill="#f4f4f4" stroke="#a0a5ab"/><path d="M7.5 8.5h9v7h-9z" fill="#f4f4f4" stroke="#a0a5ab"/></svg>
<div class="t" style="left:572px;top:168px;font-size:12.1px;color:#8a939f">Copia da...</div>
<div class="t" style="left:260.5px;top:195.5px;font-size:17px;font-weight:bold;color:#c4955a;-webkit-text-stroke:.4px #c4955a;text-shadow:1.5px 1.5px 1px #b4b4b4;letter-spacing:.1px">Materiali</div>
<div class="t" style="left:260px;top:225px;font-size:11.8px;color:#4a62a0">Calcestruzzo armato</div>
<!-- frame -->
<div class="a" style="left:258px;top:242px;width:663px;height:446px;border:3px solid #b9c9dd;background:#fff"></div>
<!-- tabs -->
<div class="a" style="left:269px;top:249px;width:123px;height:24px;background:linear-gradient(#c4d4ea,#b0c5e0);border:1px solid #8ea5c3;border-bottom:none"></div>
<div class="t" style="left:277px;top:256.5px;font-size:11.1px;color:#2b4676;letter-spacing:-.05px">Caratteristiche Lineari</div>
<div class="a" style="left:537px;top:249px;width:51px;height:24px;background:linear-gradient(#c4d4ea,#b0c5e0);border:1px solid #8ea5c3;border-bottom:none"></div>
<div class="t" style="left:544px;top:256.5px;font-size:11.1px;color:#2b4676">Grafica</div>
<div class="a" style="left:264px;top:272px;width:648px;height:407px;border:1px solid #a9bbd2;border-left-color:#8e9fb6;background:#fff"></div>
<div class="a" style="left:391px;top:247px;width:147px;height:26px;background:#fff;border:1px solid #a9bbd2;border-bottom:none"></div>
<div class="t" style="left:400px;top:256px;font-size:11.1px;color:#22334f;letter-spacing:-.1px">Caratteristiche non Lineari</div>
<!-- group boxes -->
<div class="a" style="left:269px;top:277px;width:620px;height:110px;border:1px solid #d5dbe3;border-top:none;border-radius:0 0 3px 3px"></div>
<div class="a" style="left:269px;top:397px;width:620px;height:118px;border:1px solid #d5dbe3;border-radius:3px"></div>
<div class="a" style="left:277px;top:393px;width:113px;height:10px;background:#fff"></div>
<div class="t" style="left:280.5px;top:393px;font-size:11px;font-weight:bold;color:#1d4b8c;letter-spacing:-.1px">PUNTO di ROTTURA</div>

<div class="a" style="left:330px;top:291px;width:439px;height:1px;background-image:linear-gradient(90deg,#a4a4a4 50%,transparent 50%);background-size:4px 1px"></div>
<div class="t" style="left:326px;top:286.0px;font-size:11px;color:#111;letter-spacing:-.15px;background:#fff;padding-right:4px">Sigma massima per compressione</div>
<div class="t" style="left:760px;width:55px;text-align:right;top:284.8px;font-size:12px;color:#111;letter-spacing:-.1px">[N/mm²]</div>
<div class="a" style="left:818px;top:283.5px;width:58px;height:18px;background:#f4f4f4;border:1px solid #a9b5c6"></div>
<div class="t" style="left:818px;width:55px;text-align:right;top:285.7px;font-size:11px;color:#a8a8a8">24.90</div>
<div class="a" style="left:330px;top:315px;width:456px;height:1px;background-image:linear-gradient(90deg,#a4a4a4 50%,transparent 50%);background-size:4px 1px"></div>
<div class="t" style="left:326px;top:310.0px;font-size:11px;color:#111;letter-spacing:-.15px;background:#fff;padding-right:4px">con relativa deformazione</div>
<div class="t" style="left:760px;width:55px;text-align:right;top:308.8px;font-size:12px;color:#111;letter-spacing:-.1px">[‰]</div>
<div class="a" style="left:818px;top:307.5px;width:58px;height:18px;background:#f4f4f4;border:1px solid #a9b5c6"></div>
<div class="t" style="left:818px;width:55px;text-align:right;top:309.7px;font-size:11px;color:#a8a8a8">2.00</div>
<div class="a" style="left:330px;top:339px;width:439px;height:1px;background-image:linear-gradient(90deg,#a4a4a4 50%,transparent 50%);background-size:4px 1px"></div>
<div class="t" style="left:326px;top:334.0px;font-size:11px;color:#111;letter-spacing:-.15px;background:#fff;padding-right:4px">Sigma massima per Trazione</div>
<div class="t" style="left:760px;width:55px;text-align:right;top:332.8px;font-size:12px;color:#111;letter-spacing:-.1px">[N/mm²]</div>
<div class="a" style="left:818px;top:331.5px;width:58px;height:18px;background:#f4f4f4;border:1px solid #a9b5c6"></div>
<div class="t" style="left:818px;width:55px;text-align:right;top:333.7px;font-size:11px;color:#a8a8a8">0.00</div>
<div class="a" style="left:330px;top:363px;width:456px;height:1px;background-image:linear-gradient(90deg,#a4a4a4 50%,transparent 50%);background-size:4px 1px"></div>
<div class="t" style="left:326px;top:358.0px;font-size:11px;color:#111;letter-spacing:-.15px;background:#fff;padding-right:4px">con relativa deformazione</div>
<div class="t" style="left:760px;width:55px;text-align:right;top:356.8px;font-size:12px;color:#111;letter-spacing:-.1px">[‰]</div>
<div class="a" style="left:818px;top:355.5px;width:58px;height:18px;background:#f4f4f4;border:1px solid #a9b5c6"></div>
<div class="t" style="left:818px;width:55px;text-align:right;top:357.7px;font-size:11px;color:#a8a8a8">0.10</div>
<div class="t" style="left:281.5px;top:286.5px;font-size:11.5px;color:#9a6e36">σ</div><div class="t" style="left:286.5px;top:288.5px;font-size:11px;color:#9a6e36;letter-spacing:-.4px">cmp</div>
<div class="t" style="left:281.5px;top:334.5px;font-size:11.5px;color:#9a6e36">σ</div><div class="t" style="left:286.5px;top:336.5px;font-size:11px;color:#9a6e36;letter-spacing:-.4px">trz</div>
<div class="a" style="left:330px;top:419px;width:456px;height:1px;background-image:linear-gradient(90deg,#a4a4a4 50%,transparent 50%);background-size:4px 1px"></div>
<div class="t" style="left:326px;top:414.0px;font-size:11px;color:#111;letter-spacing:-.15px;background:#fff;padding-right:4px">Deformazione rottura per compressione</div>
<div class="t" style="left:760px;width:55px;text-align:right;top:412.8px;font-size:12px;color:#111;letter-spacing:-.1px">[‰]</div>
<div class="a" style="left:818px;top:411.5px;width:58px;height:18px;background:#f4f4f4;border:1px solid #a9b5c6"></div>
<div class="t" style="left:818px;width:55px;text-align:right;top:413.7px;font-size:11px;color:#a8a8a8">3.50</div>
<div class="a" style="left:330px;top:443px;width:439px;height:1px;background-image:linear-gradient(90deg,#a4a4a4 50%,transparent 50%);background-size:4px 1px"></div>
<div class="t" style="left:326px;top:438.0px;font-size:11px;color:#111;letter-spacing:-.15px;background:#fff;padding-right:4px">con relativa sigma</div>
<div class="t" style="left:760px;width:55px;text-align:right;top:436.8px;font-size:12px;color:#111;letter-spacing:-.1px">[N/mm²]</div>
<div class="a" style="left:818px;top:435.5px;width:58px;height:18px;background:#f4f4f4;border:1px solid #a9b5c6"></div>
<div class="t" style="left:818px;width:55px;text-align:right;top:437.7px;font-size:11px;color:#a8a8a8">4.98</div>
<div class="a" style="left:330px;top:467px;width:456px;height:1px;background-image:linear-gradient(90deg,#a4a4a4 50%,transparent 50%);background-size:4px 1px"></div>
<div class="t" style="left:326px;top:462.0px;font-size:11px;color:#111;letter-spacing:-.15px;background:#fff;padding-right:4px">Deformazione di rottura per Trazione</div>
<div class="t" style="left:760px;width:55px;text-align:right;top:460.8px;font-size:12px;color:#111;letter-spacing:-.1px">[‰]</div>
<div class="a" style="left:818px;top:459.5px;width:58px;height:18px;background:#f4f4f4;border:1px solid #a9b5c6"></div>
<div class="t" style="left:818px;width:55px;text-align:right;top:461.7px;font-size:11px;color:#a8a8a8">1.00</div>
<div class="a" style="left:330px;top:491px;width:439px;height:1px;background-image:linear-gradient(90deg,#a4a4a4 50%,transparent 50%);background-size:4px 1px"></div>
<div class="t" style="left:326px;top:486.0px;font-size:11px;color:#111;letter-spacing:-.15px;background:#fff;padding-right:4px">con relativa sigma</div>
<div class="t" style="left:760px;width:55px;text-align:right;top:484.8px;font-size:12px;color:#111;letter-spacing:-.1px">[N/mm²]</div>
<div class="a" style="left:818px;top:483.5px;width:58px;height:18px;background:#f4f4f4;border:1px solid #a9b5c6"></div>
<div class="t" style="left:818px;width:55px;text-align:right;top:485.7px;font-size:11px;color:#a8a8a8">0.00</div>
<div class="t" style="left:281.5px;top:415.0px;font-size:9.5px;color:#9a6e36">ε</div><div class="t" style="left:286.5px;top:416.5px;font-size:11px;color:#9a6e36;letter-spacing:-.4px">cmp</div>
<div class="t" style="left:281.5px;top:463.0px;font-size:9.5px;color:#9a6e36">ε</div><div class="t" style="left:286.5px;top:464.5px;font-size:11px;color:#9a6e36;letter-spacing:-.4px">trz</div>
<div class="a" style="left:274px;top:525px;width:48px;height:10px;background:#ececec"></div>
<div class="t" style="left:274px;top:525px;font-size:9.6px;color:#222">LEGENDA:</div>
<div class="a" style="left:330px;top:525px;width:39px;height:10px;background:#eeeeee"></div>
<div class="t" style="left:331px;top:525px;font-size:9.6px;color:#b4b4b4">- Elastica</div>
<div class="a" style="left:377px;top:525px;width:39px;height:10px;background:#eeeeee"></div>
<div class="t" style="left:378px;top:525px;font-size:9.6px;color:#1a1ac0">- Plastica</div>
<div class="a" style="left:424px;top:525px;width:47px;height:10px;background:#eeeeee"></div>
<div class="t" style="left:425px;top:525px;font-size:9.6px;color:#e2b52a">- Softening</div>
<div class="a" style="left:269px;top:539px;width:620px;height:1px;background:#cfcfcf"></div>
<div class="a" style="left:878px;top:540px;width:1px;height:134px;background:#d8d8d8"></div>
<div class="a" style="left:278px;top:535px;width:10px;height:18px;background:#f0f0f0"></div>
<div class="a" style="left:287px;top:544px;width:17px;height:9px;background:#f0f0f0"></div>
<div class="t" style="left:279px;top:538.5px;font-size:13px;color:#2424d0">ε</div>
<div class="t" style="left:287.5px;top:544px;font-size:9px;color:#2424d0;letter-spacing:-.1px">cmp</div>
<div class="a" style="left:529px;top:640px;width:82px;height:14px;background:#f2f2f2"></div>
<div class="t" style="left:530px;top:642px;font-size:10.6px;color:#e0283a;letter-spacing:-.15px">COMPRESSIONE</div>
<div class="a" style="left:874px;top:635px;width:16px;height:20px;background:#f0f0f0"></div>
<div class="t" style="left:874px;top:641px;font-size:13px;color:#2424d0">σ</div>
<div class="t" style="left:881px;top:648px;font-size:9px;color:#2424d0;width:9px;overflow:hidden">cm</div>
<svg style="left:0;top:0" width="1281" height="723">
 <path d="M275 554.5H873.5V654.5" fill="none" stroke="#000" stroke-width="1.5" shape-rendering="crispEdges"/>
 <g stroke="#000" stroke-width="1" stroke-dasharray="3 3" fill="none" shape-rendering="crispEdges">
  <path d="M284.5 555V569.5H873"/>
  <path d="M705.5 555V633.5H873"/>
  <path d="M812.5 555V602.5H873"/>
 </g>
 <path d="M285 568.5H577.5L705.5 633.5" fill="none" stroke="#d8ae20" stroke-width="2"/>
 <path d="M705.5 633.5L722 632.5L739 630.5L764 624L785 616L812.5 602.5" fill="none" stroke="#0808d0" stroke-width="2.2"/>
 <path d="M812.5 602.5Q848 580 873 555" fill="none" stroke="#a4a4a4" stroke-width="2"/>
</svg>
<!-- content scrollbar -->
<div class="a" style="left:890px;top:277px;width:17px;height:397px;background:#f0f0f0"></div>
<div class="tri" style="left:895px;top:283px;border-left-width:4px;border-right-width:4px;border-top:none;border-bottom:4px solid #333"></div>
<div class="a" style="left:891px;top:391px;width:15px;height:265px;background:linear-gradient(90deg,#f6f6f6,#e2e2e2 50%,#c8c8c8);border:1px solid #b8b8b8;border-radius:2px"></div>
<div class="a" style="left:895px;top:519px;width:7px;height:7px;border-top:1px solid #777;border-bottom:1px solid #777"></div>
<div class="a" style="left:895px;top:522px;width:7px;height:1px;background:#777"></div>
<div class="tri" style="left:895px;top:663px;border-left-width:4px;border-right-width:4px;border-top:4px solid #333"></div>
<!-- ===== RIGHT PANEL ===== -->
<div class="a" style="left:923px;top:157px;width:4px;height:531px;background:#d6e2f0"></div>
<div class="a" style="left:924px;top:163px;width:318px;height:524px;background:#d6e2f0;border:1px solid #9fb2ca;border-radius:3px 3px 0 0"></div>
<div class="a" style="left:925px;top:164px;width:316px;height:22px;background:linear-gradient(#e2eaf5,#d3deed)"></div>
<svg style="left:930px;top:165px" width="12" height="16" viewBox="0 0 12 16"><rect x=".6" y=".6" width="10.8" height="14.8" rx="2" fill="#f6ead8" stroke="#a86a38" stroke-width="1.2"/><path d="M3 4h6M3 7h6M3 10h6M3 13h6" stroke="#707070" stroke-width="1"/><rect x="1.5" y="3" width="1.5" height="10" fill="#c8a078"/></svg>
<div class="t" style="left:947px;top:168px;font-size:11.8px;color:#7b8799">Proprietà</div>
<svg style="left:1226px;top:168px" width="8" height="11" viewBox="0 0 8 11"><path d="M1.5 .5h5M2 .5v5M6 .5v5M.5 5.5h7M4 5.5V10.5" fill="none" stroke="#2c3440" stroke-width="1.2"/><rect x="2" y="1" width="2.4" height="4.5" fill="#2c3440"/></svg>
<div class="a" style="left:926px;top:186px;width:315px;height:35px;background:#0571c8"></div>
<div class="a" style="left:925px;top:221px;width:316px;height:465px;background:#e9f0f9"></div>
<div class="a" style="left:933px;top:225px;width:60px;height:24px;background:linear-gradient(#c8d8ec,#a8bedb);border:1px solid #8ea5c3;border-bottom:none"></div>
<div class="t" style="left:942px;top:232.5px;font-size:11.3px;color:#22385e;letter-spacing:-.15px">Proprietà</div>
<div class="a" style="left:928px;top:248px;width:308px;height:433px;background:#fff;border:1px solid #a9bbd2"></div>
<div class="a" style="left:992px;top:223px;width:56px;height:26px;background:#fff;border:1px solid #a9bbd2;border-bottom:none"></div>
<div class="t" style="left:1002px;top:232.5px;font-size:11.3px;color:#1a1a1a;letter-spacing:-.15px">Risultati</div>
<div class="t" style="left:950px;top:259px;font-size:11.6px;color:#243e6e;letter-spacing:0px">Filtro entità</div>
<div class="a" style="left:1019px;top:256px;width:185px;height:19px;background:#f0f0f0;border:1px solid #b7c2cf"></div>
<div class="a" style="left:1186px;top:257px;width:17px;height:17px;background:#f0f0f0;border-left:1px solid #c9d1db"></div>
<div class="tri" style="left:1191px;top:264px;border-left-width:4px;border-right-width:4px;border-top:4px solid #b0b8c2"></div>
<svg style="left:1211px;top:258px" width="17" height="16" viewBox="0 0 17 16"><path d="M9.5 9.5l6 5.5" stroke="#c47030" stroke-width="3.2" stroke-linecap="round"/><circle cx="6" cy="6" r="5" fill="#e8f1fb" stroke="#8ea8c4" stroke-width="1.6"/><path d="M3.5 5a3 3 0 0 1 2.5-2.5" fill="none" stroke="#fff" stroke-width="1.2"/></svg>
<div class="a" style="left:931px;top:281px;width:303px;height:61px;background:#e9eff7;border:1px solid #a3adba;border-top-color:#b8c2ce"></div>
<div class="t" style="left:966px;top:291.5px;font-size:11.3px;color:#243e6e;letter-spacing:-.2px">Tipologia</div>
<div class="a" style="left:1025px;top:288px;width:201px;height:19px;background:#ece9e2;border:1px solid #a8b4c4"></div>
<div class="a" style="left:1208px;top:289px;width:17px;height:17px;background:#ece9e2;border-left:1px solid #b8c2ce"></div>
<div class="tri" style="left:1213px;top:296px;border-left-width:4px;border-right-width:4px;border-top:4px solid #b0b8c2"></div>
<div class="t" style="left:965px;top:320.5px;font-size:11.3px;color:#243e6e;letter-spacing:-.2px">Dettaglio</div>
<div class="a" style="left:1025px;top:317px;width:201px;height:19px;background:#ece9e2;border:1px solid #a8b4c4"></div>
<div class="a" style="left:1208px;top:318px;width:17px;height:17px;background:#ece9e2;border-left:1px solid #b8c2ce"></div>
<div class="tri" style="left:1213px;top:325px;border-left-width:4px;border-right-width:4px;border-top:4px solid #b0b8c2"></div>
<div class="t" style="left:1022px;top:505px;font-size:13px;color:#111;transform:scaleX(.874);transform-origin:0 0">NESSUNA SELEZIONE</div>

<!-- ===== SIDEBAR ===== -->
<div class="a" style="left:1243px;top:157px;width:30px;height:531px;background:#d9e4f1"></div>
<div class="a" style="left:1272px;top:157px;width:1px;height:532px;background:#9fb2ca"></div>
<div class="a" style="left:1246px;top:164px;width:24px;height:58px;background:linear-gradient(90deg,#e6eef8,#cfdcec);border:1px solid #a5b7ce;border-right:none"></div>
<svg style="left:1250px;top:168px" width="17" height="16" viewBox="0 0 17 16"><rect x=".5" y=".5" width="16" height="15" fill="none" stroke="#b0a890" stroke-dasharray="1.3 1.3"/><path d="M4 3h7l3 3v8H4z" fill="#f2ede4" stroke="#d8ccb8"/><path d="M6 8h6M9 6v7" stroke="#d0c4b0"/></svg>
<div class="t" style="left:1251px;top:191px;font-size:10.9px;color:#000;writing-mode:vertical-rl;letter-spacing:-.1px">Copia</div>
<div class="a" style="left:1246px;top:227px;width:24px;height:87px;background:linear-gradient(90deg,#e6eef8,#cfdcec);border:1px solid #a5b7ce;border-right:none"></div>
<svg style="left:1249px;top:230px" width="19" height="18" viewBox="0 0 19 18"><path d="M4 .5h7l4 4v8H4z" fill="#f6f6f6" stroke="#d8d8d8"/><path d="M11 .5v4h4" fill="#e4e4e4" stroke="#d8d8d8"/><text x="1.5" y="17" font-family="Liberation Sans" font-weight="bold" font-size="9.5" fill="#e4a07a" letter-spacing="-.3">BG</text></svg>
<div class="t" style="left:1251px;top:254px;font-size:10.9px;color:#000;writing-mode:vertical-rl;letter-spacing:-.1px">Background</div>
<div class="a" style="left:1246px;top:319px;width:24px;height:101px;background:linear-gradient(90deg,#e6eef8,#cfdcec);border:1px solid #a5b7ce;border-right:none"></div>
<svg style="left:1251px;top:323px" width="16" height="16" viewBox="0 0 16 16"><rect x="1" y="1" width="6" height="6" fill="#3a8ae0" stroke="#555"/><rect x="9" y="1" width="5" height="5" fill="#ddd" stroke="#666"/><rect x="1" y="9" width="6" height="6" fill="#ddd" stroke="#666"/><path d="M10 6l0 8 2-2 2 3 1-1-2-3h3z" fill="#fff" stroke="#444" stroke-width=".8"/></svg>
<div class="t" style="left:1251px;top:346px;font-size:10.9px;color:#000;writing-mode:vertical-rl;letter-spacing:-.1px">Filtro e Ricerca</div>
<div class="a" style="left:1246px;top:427px;width:24px;height:74px;background:linear-gradient(90deg,#e6eef8,#cfdcec);border:1px solid #a5b7ce;border-right:none"></div>
<svg style="left:1252px;top:430px" width="13" height="16" viewBox="0 0 13 16"><path d="M.5 .5h9l3 3v12H.5z" fill="#eef2fb" stroke="#4a5a9a"/><path d="M3 5h7v8H3zM3 9h7M6.5 5v8" fill="none" stroke="#3a40a0" stroke-width="1"/><path d="M3 5l7 8M10 5l-7 8" stroke="#6a70c0" stroke-width=".6"/></svg>
<div class="t" style="left:1251px;top:452px;font-size:10.9px;color:#000;writing-mode:vertical-rl;letter-spacing:-.1px">Armature</div>
<div class="a" style="left:1246px;top:507px;width:24px;height:69px;background:linear-gradient(90deg,#e6eef8,#cfdcec);border:1px solid #a5b7ce;border-right:none"></div>
<svg style="left:1251px;top:511px" width="16" height="15" viewBox="0 0 16 15"><path d="M1 14V6h3v8M5 14V2h3v12M9 14V4h3v10" fill="#e6e6e6" stroke="#7a7a7a" stroke-width=".9"/><path d="M4 6l1.5-1.5v9.5L4 14zM8 2l1.5-1.5v13.5L8 14zM12 4l1.5-1.5v11.5L12 14z" fill="#b0b0b0"/><path d="M0 14.5h15" stroke="#888"/></svg>
<div class="t" style="left:1251px;top:532px;font-size:10.9px;color:#000;writing-mode:vertical-rl;letter-spacing:-.1px">Risultati</div>
<div class="a" style="left:1246px;top:582px;width:24px;height:72px;background:linear-gradient(90deg,#e6eef8,#cfdcec);border:1px solid #a5b7ce;border-right:none;border-bottom:none"></div>
<svg style="left:1251px;top:586px" width="15" height="15" viewBox="0 0 15 15"><path d="M.5 .5h5v14h-5z" fill="#58c040" stroke="#3a4a3a" stroke-width=".9"/><path d="M5.5 6.5L12 1.5v5L5.5 14z" fill="#f0d020" stroke="#6a6020" stroke-width=".8"/><path d="M5.5 .5h9v6h-9z" fill="#cfe6f8" stroke="#4a6a8a" stroke-width=".9"/></svg>
<div class="t" style="left:1251px;top:608px;font-size:10.9px;color:#000;writing-mode:vertical-rl;letter-spacing:-.1px;height:45px;overflow:hidden">Collegam</div>
<div class="tri" style="left:1254px;top:659px;border-left-width:5px;border-right-width:5px;border-top:none;border-bottom:5px solid #b8c4d2"></div>
<div class="tri" style="left:1254px;top:678px;border-left-width:5px;border-right-width:5px;border-top:5px solid #5a6a80"></div>

<!-- ===== STATUS BAR ===== -->
<div class="a" style="left:8px;top:689px;width:1265px;height:24px;background:linear-gradient(#e4ebf5,#cbd7e7);border:1px solid #8fa1b8"></div>
<div class="t" style="left:10px;top:695.5px;font-size:11.2px;color:#2e4a7a;letter-spacing:-.38px">EdiLus CA+PO+EE+AC+MU+LG 30.00Sd</div>
<div class="a" style="left:807px;top:691px;width:1px;height:20px;background:#a8b8cc;box-shadow:1px 0 0 #f4f8fc"></div>
<svg style="left:812px;top:693px" width="12" height="14" viewBox="0 0 12 14"><rect x="1" y="0.5" width="8" height="9" fill="#5a8ad0" stroke="#2a4a80" stroke-width=".8"/><rect x="3" y="2" width="4" height="4" fill="#c8e0f8"/><path d="M2 8l4 5h5l-3-6z" fill="#d0a060" stroke="#7a5a30" stroke-width=".6"/></svg>
<div class="t" style="left:827px;top:693px;font-size:12.2px;font-weight:bold;color:#3a5b9e;letter-spacing:.1px">Cemento Armato (Armature)</div>
<div class="a" style="left:1032px;top:691px;width:1px;height:20px;background:#a8b8cc;box-shadow:1px 0 0 #f4f8fc"></div>
<div class="a" style="left:1177px;top:691px;width:1px;height:20px;background:#a8b8cc;box-shadow:1px 0 0 #f4f8fc"></div>
<div class="a" style="left:1203px;top:691px;width:1px;height:20px;background:#a8b8cc;box-shadow:1px 0 0 #f4f8fc"></div>
<div class="a" style="left:1229px;top:691px;width:1px;height:20px;background:#a8b8cc;box-shadow:1px 0 0 #f4f8fc"></div>
<svg style="left:1259px;top:698px" width="12" height="12" viewBox="0 0 12 12"><g fill="#8a9aae"><rect x="8" y="0" width="2" height="2"/><rect x="4" y="4" width="2" height="2"/><rect x="8" y="4" width="2" height="2"/><rect x="0" y="8" width="2" height="2"/><rect x="4" y="8" width="2" height="2"/><rect x="8" y="8" width="2" height="2"/></g></svg>

<!-- ===== CALLOUT ARROWS ===== -->
<svg style="left:0;top:0;z-index:20" width="1281" height="723">
 <g fill="#139ee0" stroke="#139ee0" stroke-width="1.5" stroke-linejoin="round">
  <path d="M108.5 347L145 317V330.5H181V363H145V377z"/>
  <path d="M137 451.7L175.4 421.5V435.5H209.7V468H175.4V482.2z"/>
  <path d="M170 599.2L208.5 569V583H242.8V616.2H208.5V630.3z"/>
  <path d="M453.4 176H486.6V211H501L470 248.4L438.7 211H453.4z"/>
 </g>
 <g fill="#fff" font-family="Liberation Serif" font-weight="bold" font-size="27">
  <text x="131" y="357.5">1</text>
  <text x="158" y="462.5">2</text>
  <text x="195" y="609">3</text>
  <text x="463" y="227.5">4</text>
 </g>
</svg>
<div class="a" style="left:0;top:0;width:1280px;height:720px;border:1px solid #a3adb9;border-top-color:#5a6470;pointer-events:none;z-index:30"></div>
</div></body></html>
